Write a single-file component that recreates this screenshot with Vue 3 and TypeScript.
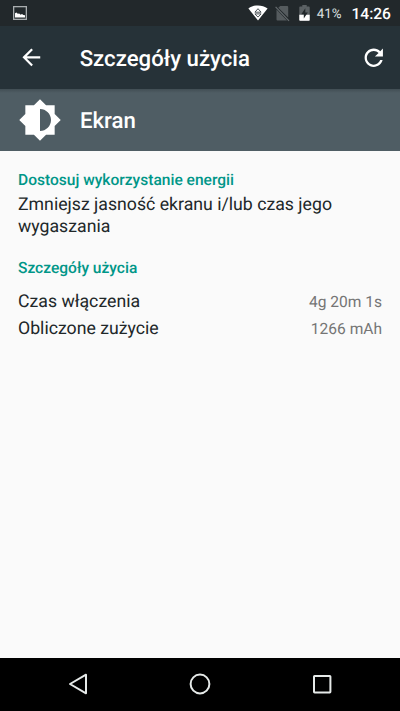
<script setup lang="ts">
interface UsageRow {
  label: string
  value: string
}

const usage: UsageRow[] = [
  { label: 'Czas włączenia', value: '4g 20m 1s' },
  { label: 'Obliczone zużycie', value: '1266 mAh' },
]
</script>

<template>
  <div class="screen">
    <div class="status-bar">
      <svg class="picture" width="14" height="14" viewBox="0 0 14 14">
        <rect x=".65" y=".65" width="12.7" height="12.7" fill="none" stroke="#a9adaf" stroke-width="1.3" />
        <path d="M2 11.600V7.200l1.400-.6 1.400 1.200 1.400-.4 1.400 1.400 1.400-.8 1.400 1 1.600.2v2.400z" fill="#fff" />
      </svg>
      <svg class="wifi" width="20" height="16" viewBox="0 0 20 16">
        <path d="M.4 3.4C5.8-.6 14.2-.6 19.6 3.4L10 15.5z" fill="#fff" />
        <path d="M6.900 7.200 10 3.700l3.100 3.500zM6.900 8.900h6.200L10 12.100z" fill="none" stroke="#3a4246" stroke-width=".9" />
      </svg>
      <svg class="sim" width="15" height="17" viewBox="0 0 15 17">
        <path d="M5.200 1H12.200q1 0 1 1v10.500L3.300 2.800zM1.500 4.500 12 15.600H2.500q-1 0-1-1z" fill="#555b5e" />
        <path d="M.6 1.800 14 15.800" stroke="#656b6e" stroke-width="1.200" />
      </svg>
      <svg class="battery" width="11" height="16" viewBox="0 0 11 16">
        <path d="M3.300 0h4.400v1.600h2.200q.8 0 .8.800V15q0 .8-.8.800H1.100Q.3 15.800.3 15V2.400q0-.8.800-.8h2.200z" fill="#5b6164" />
        <path d="M.3 9.700h10.400V15q0 .8-.8.800H1.100Q.3 15.800.3 15z" fill="#fff" />
        <path d="M6.300 3.300 2.300 9.300h2.500v4.300l4-6.200H6.300z" fill="#22282b" />
      </svg>
      <span class="percent">41%</span>
      <span class="clock">14:26</span>
    </div>

    <header class="app-bar">
      <svg class="back" width="26.700" height="26.700" viewBox="0 0 24 24">
        <path d="M20 11H7.830l5.590-5.590L12 4l-8 8 8 8 1.410-1.410L7.830 13H20v-2z" fill="#fff" />
      </svg>
      <h1>Szczegóły użycia</h1>
      <svg class="refresh" width="27.500" height="27.500" viewBox="0 0 24 24">
        <path d="M17.650 6.350C16.200 4.900 14.210 4 12 4c-4.420 0-7.990 3.580-7.990 8s3.570 8 7.990 8c3.730 0 6.840-2.550 7.730-6h-2.080c-.82 2.330-3.040 4-5.650 4-3.310 0-6-2.690-6-6s2.690-6 6-6c1.660 0 3.140.69 4.220 1.780L13 11h7V4l-2.350 2.350z" fill="#fff" />
      </svg>
    </header>

    <section class="entry">
      <svg width="44" height="44" viewBox="0 0 24 24">
        <path d="M20 15.310L23.310 12 20 8.690V4h-4.690L12 .69 8.690 4H4v4.690L.69 12 4 15.310V20h4.690L12 23.310 15.310 20H20v-4.690zM12 18V6c3.310 0 6 2.690 6 6s-2.690 6-6 6z" fill="#fff" />
      </svg>
      <h2>Ekran</h2>
    </section>

    <main>
      <h3>Dostosuj wykorzystanie energii</h3>
      <p>Zmniejsz jasność ekranu i/lub czas jego wygaszania</p>
      <h3 class="details">Szczegóły użycia</h3>
      <div v-for="row in usage" :key="row.label" class="row">
        <span>{{ row.label }}</span>
        <span class="value">{{ row.value }}</span>
      </div>
    </main>

    <nav>
      <svg width="24" height="24" viewBox="0 0 24 24">
        <path d="M20 2.700v18.600L4 12z" fill="none" stroke="#e6eae9" stroke-width="2" stroke-linejoin="round" />
      </svg>
      <svg width="24" height="24" viewBox="0 0 24 24">
        <circle cx="12" cy="12" r="9.400" fill="none" stroke="#e6eae9" stroke-width="2" />
      </svg>
      <svg width="24" height="24" viewBox="0 0 24 24">
        <rect x="4" y="4" width="16.400" height="16.400" rx=".6" fill="none" stroke="#e6eae9" stroke-width="2" />
      </svg>
    </nav>
  </div>
</template>

<style>
body {
  margin: 0;
}
</style>

<style scoped>
.screen {
  width: 400px;
  height: 711px;
  display: flex;
  flex-direction: column;
  overflow: hidden;
  background: #fafafa;
  color: #212729;
  font-family: Roboto, "Noto Sans", sans-serif;
  text-rendering: geometricPrecision;
}
svg {
  display: block;
  flex: none;
}
h1, h2, h3, p {
  margin: 0;
  font-weight: 500;
}
.status-bar {
  height: 26px;
  box-sizing: border-box;
  flex: none;
  display: flex;
  align-items: center;
  padding: 0 9px 0 13px;
  background: #22282b;
  color: #fff;
}
.wifi {
  margin-left: auto;
}
.sim {
  margin-left: 7px;
}
.battery {
  margin-left: 9px;
}
.percent {
  margin-left: 7px;
  padding-top: 3px;
  font-size: 13.300px;
  color: #dfe1e2;
}
.clock {
  margin-left: 10px;
  padding-top: 2px;
  font-size: 15.600px;
  font-weight: 500;
}
.app-bar {
  height: 62.500px;
  box-sizing: border-box;
  flex: none;
  display: flex;
  align-items: center;
  padding: 0 13px 0 18px;
  background: #263238;
  color: #fff;
}
h1, h2 {
  font-size: 22.200px;
  line-height: 26px;
}
h1 {
  margin-left: 35px;
  padding-top: 3px;
}
.refresh {
  margin-left: auto;
}
.entry {
  height: 62px;
  flex: none;
  display: flex;
  align-items: center;
  padding-left: 18px;
  background: linear-gradient(#414e54, #4f5d64 4px);
  color: #fff;
}
h2 {
  margin-left: 18px;
  padding-top: 3px;
}
main {
  flex: 1;
  padding: 19.500px 18px 0;
}
h3 {
  font-size: 15.550px;
  line-height: 20px;
  color: #009688;
}
p {
  margin-top: 5px;
  font-size: 17.700px;
  font-weight: 400;
  line-height: 21.500px;
}
.details {
  margin-top: 20px;
}
.row {
  display: flex;
  justify-content: space-between;
  align-items: baseline;
  font-size: 17.700px;
  line-height: 26.500px;
}
.details + .row {
  margin-top: 11px;
}
.value {
  font-size: 15.550px;
  color: #757575;
}
nav {
  height: 53.500px;
  flex: none;
  display: flex;
  justify-content: center;
  align-items: center;
  gap: 98px;
  background: #000;
}
</style>
